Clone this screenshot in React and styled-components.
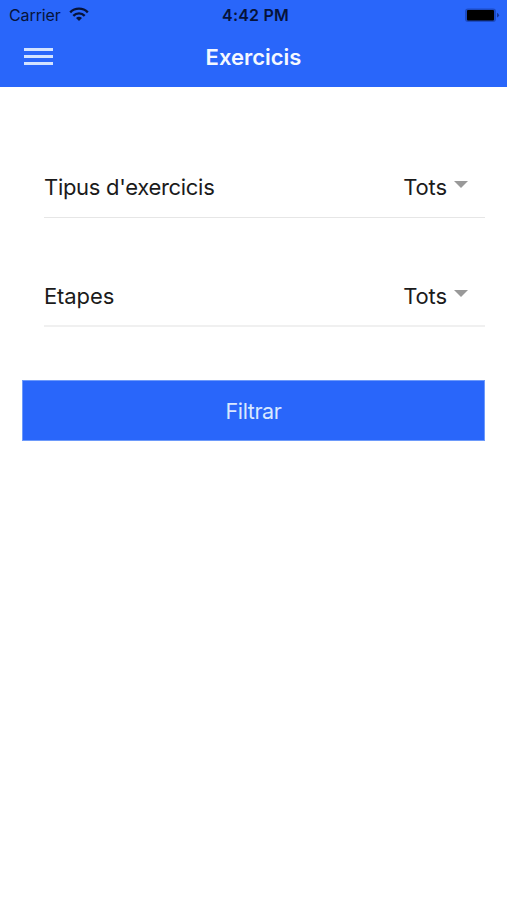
import React, { useState } from "react";
import styled, { createGlobalStyle } from "styled-components";

const GlobalStyle = createGlobalStyle`
    * {
        box-sizing: border-box;
    }
    body {
        margin: 0;
        background-color: #fff;
        font-family: Inter, "Liberation Sans", sans-serif;
    }
`;

const filters = [
    { id: "type", label: "Tipus d'exercicis", spacing: "-0.3px", line: "#e6e6e6" },
    { id: "stage", label: "Etapes", spacing: "-0.1px", line: "#f0f0f0" },
];

const App = () => {
    // States
    const [values] = useState({ type: "Tots", stage: "Tots" });

    return (
        <Screen>
            <GlobalStyle />
            <Header>
                <StatusBar>
                    <Carrier>
                        <span>Carrier</span>
                        <svg width="20" height="14" viewBox="0 0 20 14">
                            <g fill="none" stroke="#06133a" strokeWidth="2.4">
                                <path d="M1.2 5.3a12.4 12.4 0 0 1 17.6 0" />
                                <path d="M4.3 8.8a8 8 0 0 1 11.4 0" />
                            </g>
                            <path
                                d="M10 14 7 11.1a4.3 4.3 0 0 1 6 0z"
                                fill="#06133a"
                            />
                        </svg>
                    </Carrier>
                    <Time>4:42 PM</Time>
                    <Battery>
                        <svg width="36" height="15" viewBox="0 0 36 15">
                            <rect
                                x="1"
                                y="0.5"
                                width="31"
                                height="13.5"
                                rx="3"
                                fill="#1c4bc4"
                            />
                            <rect
                                x="3"
                                y="2"
                                width="27"
                                height="10.5"
                                rx="1"
                                fill="#000"
                            />
                            <path d="M33 4.8q4 2.4 0 4.8z" fill="#15379a" />
                        </svg>
                    </Battery>
                </StatusBar>
                <NavBar>
                    <MenuButton aria-label="Menu">
                        <MenuLine />
                        <MenuLine />
                        <MenuLine />
                    </MenuButton>
                    <Title>Exercicis</Title>
                </NavBar>
            </Header>
            <Form>
                {filters.map((filter) => (
                    <Row key={filter.id} $line={filter.line}>
                        <Label $spacing={filter.spacing}>{filter.label}</Label>
                        <Select>
                            {values[filter.id]}
                            <Arrow />
                        </Select>
                    </Row>
                ))}
                <SubmitButton type="button">Filtrar</SubmitButton>
            </Form>
        </Screen>
    );
};

const Screen = styled.main`
    width: 100%;
    max-width: 507px;
    min-height: 900px;
    background-color: #fff;
`;

const Header = styled.header`
    height: 87px;
    background-color: #2966fa;
`;

const StatusBar = styled.div`
    display: grid;
    grid-template-columns: 1fr auto 1fr;
    align-items: center;
    height: 30px;
    padding: 0 7px 0 9px;
    color: #06133a;
    font-size: 16px;
    line-height: 30px;
`;

const Carrier = styled.div`
    display: flex;
    align-items: center;
    gap: 8px;
    letter-spacing: -0.1px;

    svg {
        margin-top: -2px;
    }
`;

const Time = styled.div`
    padding-left: 2px;
    font-weight: 600;
    letter-spacing: 0.2px;
`;

const Battery = styled.div`
    display: flex;
    justify-content: flex-end;
`;

const NavBar = styled.nav`
    display: grid;
    grid-template-columns: 1fr auto 1fr;
    align-items: center;
    height: 54px;
    padding: 0 24px;
`;

const MenuButton = styled.button`
    display: flex;
    flex-direction: column;
    gap: 4px;
    width: 29px;
    margin-top: -1px;
    padding: 0;
    border: none;
    background: none;
`;

const MenuLine = styled.span`
    height: 3px;
    background-color: #d3e3ff;
`;

const Title = styled.h1`
    margin: 0;
    color: #f4f8ff;
    font-size: 22px;
    font-weight: 600;
    line-height: 30px;
`;

const Form = styled.form`
    padding: 22px 22px 0;
`;

const Row = styled.div`
    display: flex;
    align-items: flex-end;
    justify-content: space-between;
    height: 109px;
    margin-left: 22px;
    padding: 0 17px 14px 0;
    border-bottom: 2px solid ${({ $line }) => $line};
    color: #1b1b1b;
    font-size: 22px;
    line-height: 30px;

    &:first-child {
        padding-bottom: 15px;
        border-bottom-width: 1px;
    }
`;

const Label = styled.label`
    letter-spacing: ${({ $spacing }) => $spacing};
`;

const Select = styled.div`
    display: flex;
    align-items: center;
    gap: 7px;
    letter-spacing: -0.1px;
`;

const Arrow = styled.span`
    margin-bottom: 5px;
    border-top: 7px solid #999;
    border-right: 7px solid transparent;
    border-left: 7px solid transparent;
`;

const SubmitButton = styled.button`
    display: block;
    width: 100%;
    height: 61px;
    margin-top: 53px;
    padding: 0;
    border: 1px solid #6d9afb;
    background-color: #2966fa;
    color: #d9e8ff;
    font-family: inherit;
    font-size: 21.5px;
    letter-spacing: -0.4px;
    line-height: 30px;
`;

export default App;
